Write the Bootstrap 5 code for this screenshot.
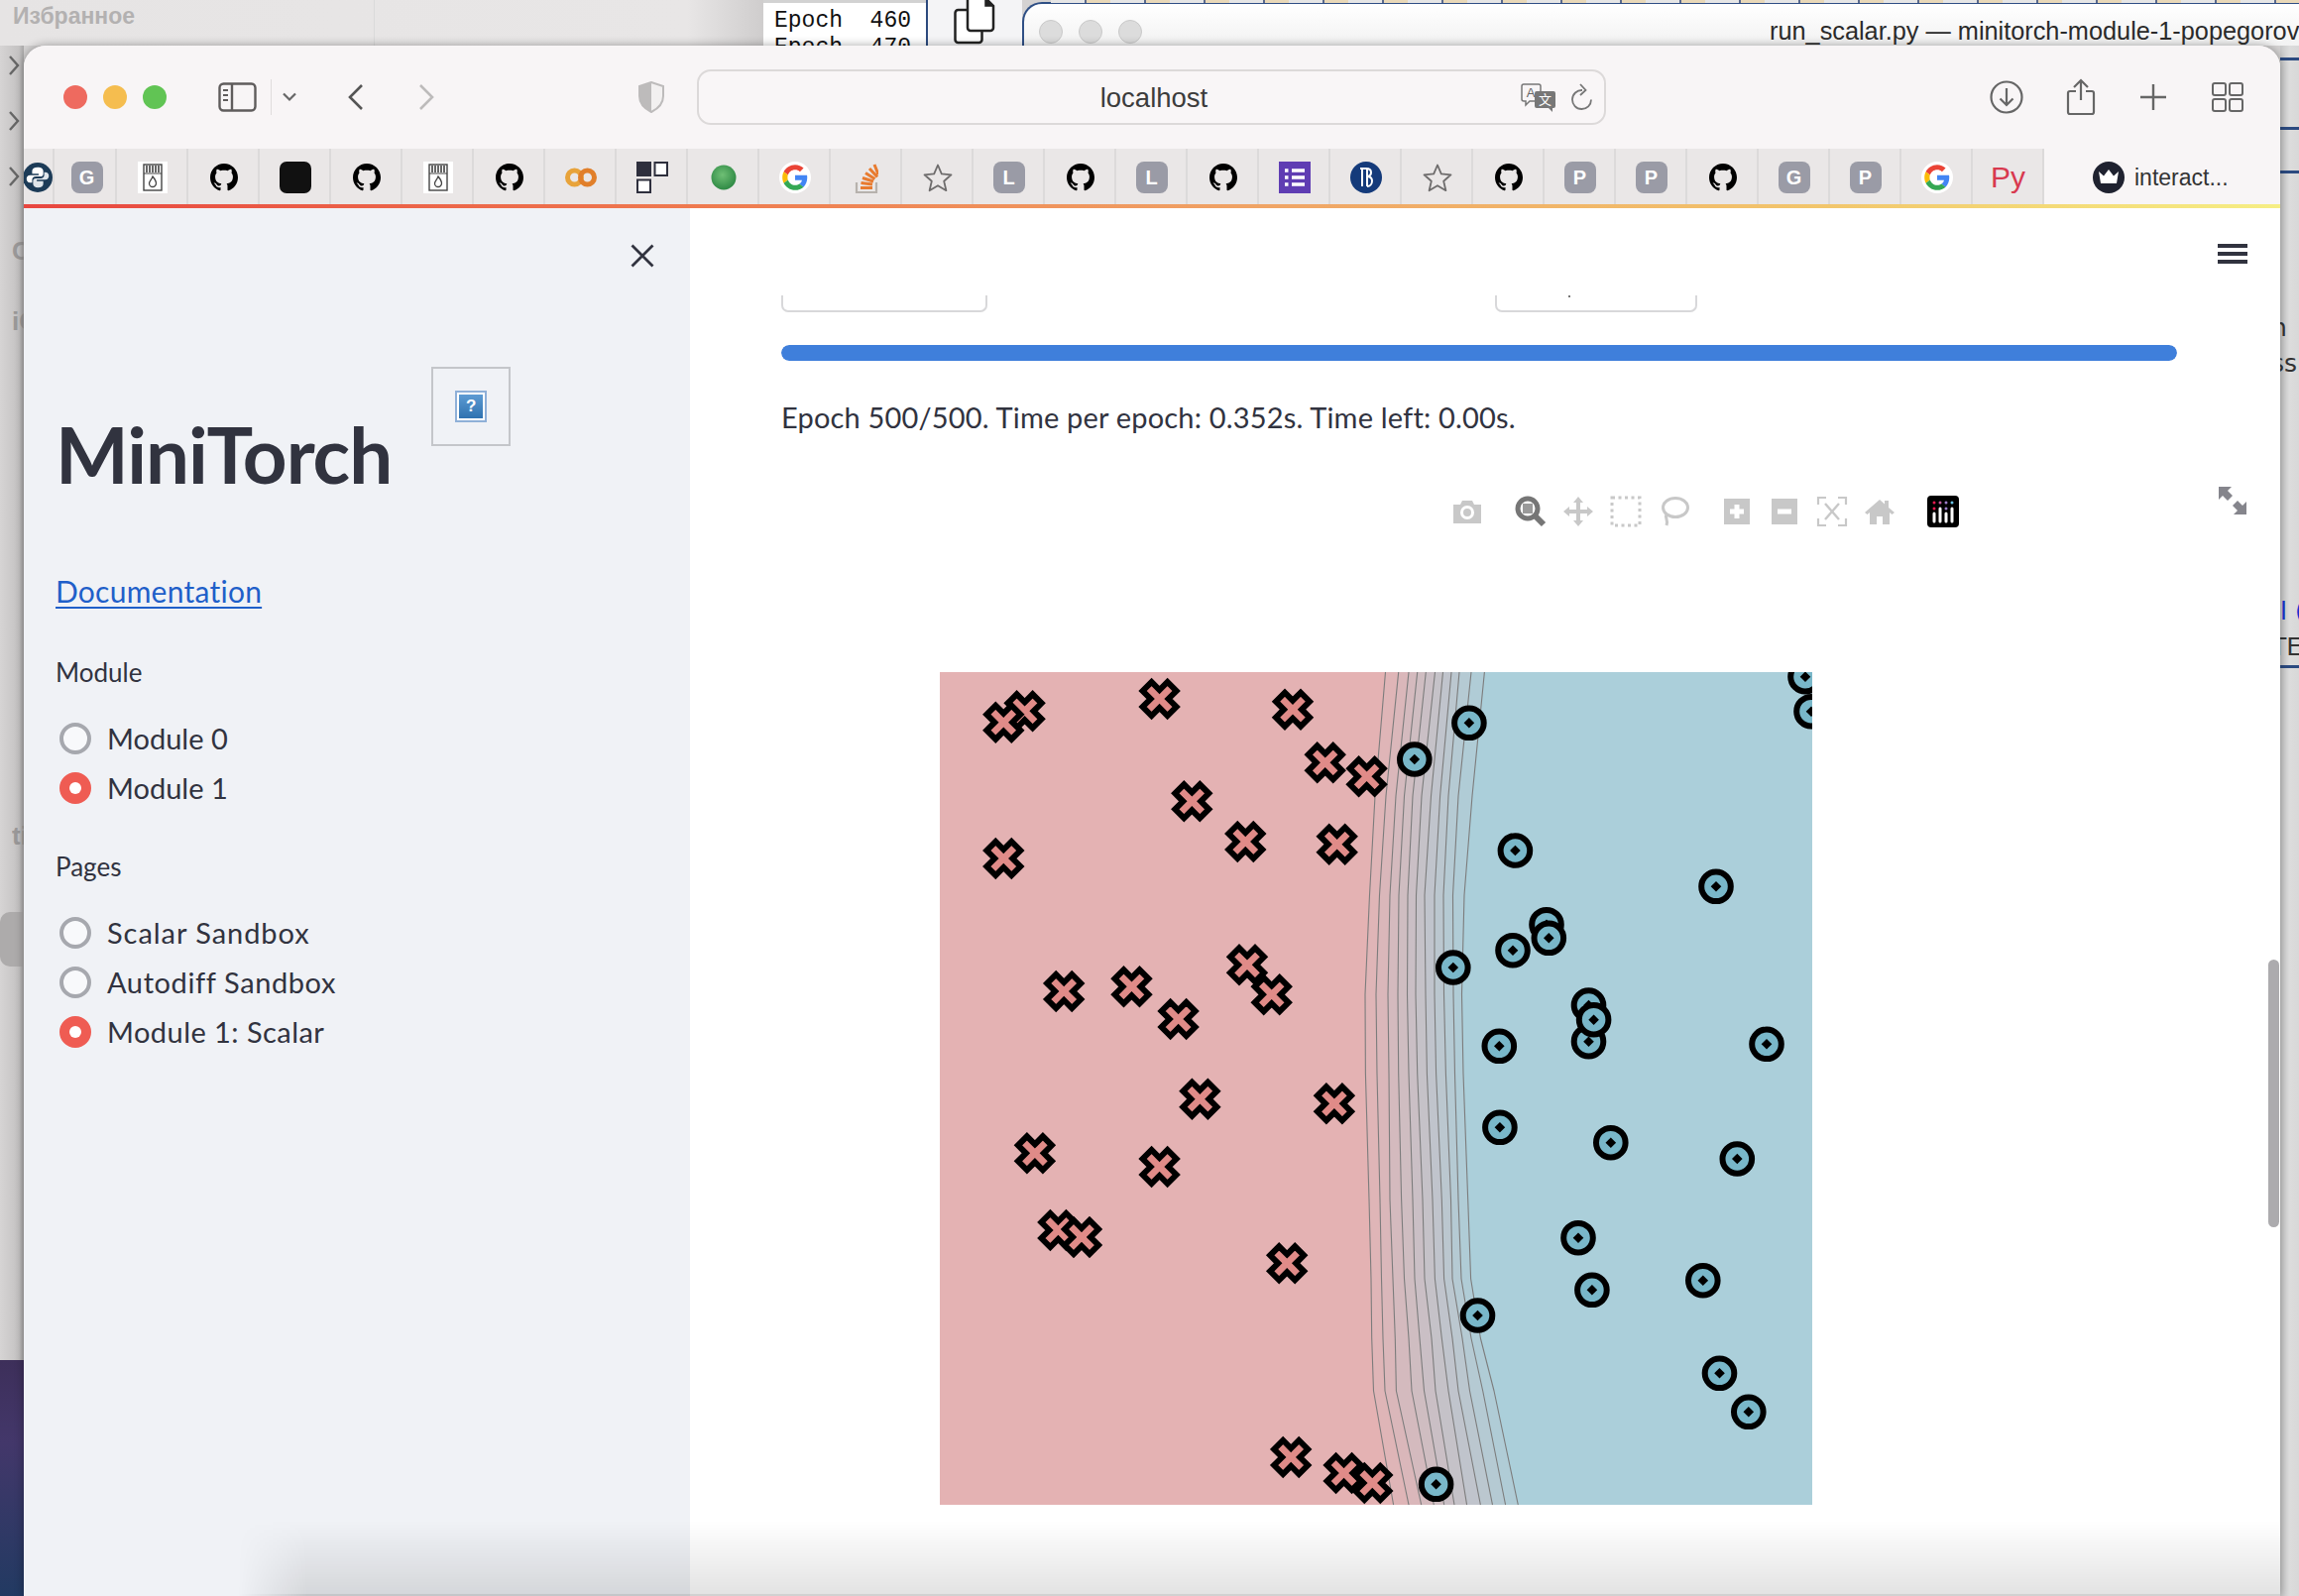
<!DOCTYPE html>
<html lang="en">
<head>
<meta charset="utf-8">
<title>MiniTorch</title>
<link href="https://cdn.jsdelivr.net/npm/bootstrap@5.3.0/dist/css/bootstrap.min.css" rel="stylesheet">
<style>
html,body{margin:0;height:100%;overflow:hidden;background:#d4d2d2;font-family:"Lato","Liberation Sans",sans-serif;color:#31333f}
.desk{position:relative;width:2319px;height:1610px;overflow:hidden}
.bg-left{position:absolute;left:0;top:0;width:770px;height:46px;background:linear-gradient(90deg,#e6e4e4 0,#e8e6e6 90%,#cfcdcd)}
.bg-left-rule{position:absolute;left:377px;top:0;width:1px;height:46px;background:#dadada}
.bg-strip{position:absolute;left:0;top:46px;width:24px;height:1326px;background:linear-gradient(90deg,#d6d4d4,#c4c2c2 80%,#a9a8a8)}
.bg-purple{position:absolute;left:0;top:1372px;width:24px;height:238px;background:linear-gradient(180deg,#3d2f5a,#43376a 35%,#223a62)}
.fav{position:absolute;left:13px;top:3px;font:700 23px "Liberation Sans",sans-serif;color:#b3b1b1}
.chev{position:absolute;left:8px;width:12px;height:22px}
.frag{position:absolute;font:700 26px "Liberation Sans",sans-serif;color:#9b9999;overflow:hidden}
.frag-pill{position:absolute;left:0;top:920px;width:24px;height:55px;background:#adabab;border-radius:10px 0 0 10px}
.term{position:absolute;left:770px;top:3px;width:164px;height:43px;background:#fff;overflow:hidden;font:23px/27px "Liberation Mono",monospace;color:#111;padding:5px 11px 0;white-space:pre}
.term-top{position:absolute;left:770px;top:0;width:164px;height:3px;background:#d2d2d2}
.copy-pane{position:absolute;left:934px;top:0;width:97px;height:46px;background:#f4f4f6;border-left:2px solid #2c4a7e}
.vs-win{position:absolute;left:1031px;top:2px;width:1288px;height:44px;background:linear-gradient(180deg,#fff,#f2f2f2);border:2px solid #2f4f85;border-right:0;border-bottom:0;border-radius:20px 0 0 0}
.vs-top{position:absolute;left:1060px;top:0;width:1259px;height:3px;background:repeating-linear-gradient(90deg,#e6e6e6 0 34px,#5b6a8c 34px 36px,#e9d8b8 36px 60px)}
.vs-dot{position:absolute;top:20px;width:24px;height:24px;border-radius:50%;background:#dcdcdc;border:1px solid #c9c9c9}
.vs-title{position:absolute;left:1785px;top:16px;font:25.3px/30px "Liberation Sans",sans-serif;color:#2a2a2a;white-space:nowrap;width:534px;overflow:hidden;z-index:2}
.bg-right{position:absolute;left:2300px;top:46px;width:19px;height:1564px;background:linear-gradient(90deg,#c9c9c9,#dcdcdc 50%,#d8d8d8)}
.bg-rule{position:absolute;left:2300px;width:19px;height:3px;background:#2b4a80}
.bg-txt{position:absolute;left:2300px;width:19px;overflow:hidden;white-space:nowrap;font:25px/30px "DejaVu Sans",sans-serif;color:#333;text-indent:-9px}

.browser{position:absolute;left:24px;top:46px;width:2276px;height:1564px;background:#f8f5f6;border-radius:22px 22px 0 0;overflow:hidden;box-shadow:0 0 10px rgba(0,0,0,.35)}
.toolbar{height:104px;background:#f8f5f6}
.light{width:24px;height:24px;border-radius:50%}
.l-r{background:#ee6a5f;margin-left:40px}.l-y{background:#f5bd4f;margin-left:16px}.l-g{background:#61c454;margin-left:16px}
.tb-ic{flex:none;display:block}
.m-side{margin-left:52px}.m-sep{width:1px;height:36px;background:#e0dddd;margin-left:14px}.m-cd{margin-left:11px}
.m-back{margin-left:51px}.m-fwd{margin-left:53px}.m-shield{margin-left:204px}
.urlbar{flex:none;width:917px;height:56px;margin-left:32px;padding-left:5px;border:2px solid #dcd9d9;border-radius:14px;background:#f9f6f7;position:relative;font:27.5px/54px "Liberation Sans",sans-serif;color:#3c3c3c;text-align:center}
.url-tr{position:absolute;right:48px;top:12px}.url-re{position:absolute;right:11px;top:12px}
.m-dl{margin-left:387px}.m-share{margin-left:43px}.m-plus{margin-left:44px}.m-grid{margin-left:45px}

.tabstrip{height:56px;background:#f8f5f6}
.tabcell{flex:none;width:72px;height:56px;padding:2px 0 0 1px;background:#eae7e7;border-right:2px solid #dcdada;display:flex;align-items:center;justify-content:center}
.tab-a{width:31px;padding-left:0;justify-content:flex-end;overflow:hidden}
.tab-b{width:63px;padding-left:4px}
.tile{width:32px;height:32px;border-radius:8px;background:#9a9ba6;color:#fff;font:700 20px/32px "Liberation Sans",sans-serif;text-align:center}
.tile-py{font:30px/32px "Liberation Sans",sans-serif;color:#d8394f;width:36px;text-align:center}
.active-tab{flex:none;margin-left:49px;padding-top:2px;font:23px/32px "Liberation Sans",sans-serif;color:#333;white-space:nowrap}
.active-tab svg{margin-right:10px}
.rainbow{height:4px;background:linear-gradient(90deg,#e8463f,#ef7a4f 30%,#f0a465 55%,#f2c66c 80%,#f6ee84)}

.page{height:1400px;position:relative;overflow:hidden;background:#fff}
.side{flex:none;width:672px;background:#f0f2f6;padding:36px 36px 0 32px}
.side-x{height:24px}
.title-row{margin-top:100px}
.app-title{font:700 78px/96px "Lato",sans-serif;letter-spacing:-1px;margin:40px 0 0;color:#31333f}
.broken{width:80px;height:80px;border:2px solid #c4c6ca;margin-left:40px;flex:none}
.broken-in{width:32px;height:32px;border:2px solid #8fb0d8;background:#fff;padding:2px}
.broken-q{display:block;width:100%;height:100%;background:linear-gradient(180deg,#5d9bd3,#2f72b0);color:#fff;font:700 17px/24px "Liberation Sans",sans-serif;text-align:center}
.doc-link{display:block;margin-top:70px;font:30px/40px "Lato",sans-serif;letter-spacing:.25px;color:#1f5fc9;text-decoration:underline;text-underline-offset:4px;text-decoration-thickness:2px}
.grp-label{font:26px/36px "Lato",sans-serif;color:#31333f}
.gl-1{margin-top:44px}.gl-2{margin-top:36px}
.radios{margin-top:24px}.radios-2{margin-top:24px}
.radio-row{height:50px;padding:0 0 0 4px;margin:0;gap:16px;min-height:0}
.radio-row .form-check-input{float:none;margin:0;width:32px;height:32px;flex:none;border:4px solid #a6a8ae;background-color:#f8f9fb}
.radio-row .form-check-input:checked{background-color:#ef5c53;border-color:#ef5c53}
.radio-row .form-check-label{font:29px/40px "Lato",sans-serif;color:#31333f}
.radio-row .ls-s{letter-spacing:.95px}.radio-row .ls-a{letter-spacing:.6px}.radio-row .ls-m{letter-spacing:.45px}

.main-pane{flex:1 1 auto;min-width:0;background:#fff;position:relative}
.main-head{height:88px;padding:36px 33px 0 0}
.burger{width:30px;height:20px;border-top:4px solid #31333f;border-bottom:4px solid #31333f;position:relative}
.burger::before{content:"";position:absolute;left:0;right:0;top:4px;height:4px;background:#31333f}
.inner{padding:0 104px 0 92px}
.stub-row{height:17px}
.stub{height:17px;border:2px solid #d8d8da;border-top:0;border-radius:0 0 7px 7px}
.stub-a{width:208px}.stub-b{width:204px;margin-left:512px;position:relative}
.stub-b::after{content:"";position:absolute;left:72px;top:0;width:2px;height:2px;background:#777}
.prog{height:16px;margin-top:33px;border-radius:8px;background:#f0f2f6}
.prog .progress-bar{background:#3f7fdb;border-radius:8px}
.status{margin:37px 0 0;font:29px/40px "Lato",sans-serif;letter-spacing:.18px;color:#31333f;white-space:nowrap}
.modebar{margin:59px 0 0 676px;height:32px;gap:32px}
.mb-g{gap:16px}
.expand{position:absolute;left:1542px;top:281px}
.plot{display:block;margin:146px 0 0 160px;width:880px;height:840px}
.scrolly{position:absolute;right:1px;top:758px;width:11px;height:270px;border-radius:6px;background:#acabae}
.dock-shade{position:absolute;left:216px;right:0;bottom:0;height:76px;background:linear-gradient(0deg,rgba(0,0,0,.11),rgba(0,0,0,0));border-bottom:2px solid rgba(0,0,0,.18);-webkit-mask-image:linear-gradient(90deg,transparent,#000 70px);mask-image:linear-gradient(90deg,transparent,#000 70px);pointer-events:none}
</style>
</head>
<body>
<svg width="0" height="0" class="position-absolute">
  <defs>
    <symbol id="gh" viewBox="0 0 24 24"><path fill="#000" d="M12 0c-6.626 0-12 5.373-12 12 0 5.302 3.438 9.8 8.207 11.387.599.111.793-.261.793-.577v-2.234c-3.338.726-4.033-1.416-4.033-1.416-.546-1.387-1.333-1.756-1.333-1.756-1.089-.745.083-.729.083-.729 1.205.084 1.839 1.237 1.839 1.237 1.07 1.834 2.807 1.304 3.492.997.107-.775.418-1.305.762-1.604-2.665-.305-5.467-1.334-5.467-5.931 0-1.311.469-2.381 1.236-3.221-.124-.303-.535-1.524.117-3.176 0 0 1.008-.322 3.301 1.23.957-.266 1.983-.399 3.003-.404 1.02.005 2.047.138 3.006.404 2.291-1.552 3.297-1.23 3.297-1.23.653 1.653.242 2.874.118 3.176.77.84 1.235 1.911 1.235 3.221 0 4.609-2.807 5.624-5.479 5.921.43.372.823 1.102.823 2.222v3.293c0 .319.192.694.801.576 4.765-1.589 8.199-6.086 8.199-11.386 0-6.627-5.373-12-12-12z"/></symbol>
    <symbol id="goog" viewBox="-6 -6 60 60"><circle cx="24" cy="24" r="30" fill="#fff"/><path fill="#EA4335" d="M24 9.5c3.54 0 6.71 1.22 9.21 3.6l6.85-6.85C35.9 2.38 30.47 0 24 0 14.62 0 6.51 5.38 2.56 13.22l7.98 6.19C12.43 13.72 17.74 9.5 24 9.5z"/><path fill="#4285F4" d="M46.98 24.55c0-1.57-.15-3.09-.38-4.55H24v9.02h12.94c-.58 2.96-2.26 5.48-4.78 7.18l7.73 6c4.51-4.18 7.09-10.36 7.09-17.65z"/><path fill="#FBBC05" d="M10.53 28.59c-.48-1.45-.76-2.99-.76-4.59s.27-3.14.76-4.59l-7.98-6.19C.92 16.46 0 20.12 0 24c0 3.88.92 7.54 2.56 10.78l7.97-6.19z"/><path fill="#34A853" d="M24 48c6.48 0 11.93-2.13 16.03-5.81l-7.73-6c-2.15 1.45-4.92 2.3-8.3 2.3-6.26 0-11.57-4.22-13.47-9.91l-7.98 6.19C6.51 42.62 14.62 48 24 48z"/></symbol>
    <symbol id="match" viewBox="0 0 30 32"><rect width="30" height="32" fill="#fff"/><rect x="6" y="3" width="18" height="26" fill="#fff" stroke="#444" stroke-width="1.4"/><path d="M9 4v7M12 4v7M15 4v7M18 4v7M21 4v7" stroke="#333" stroke-width="1.5"/><path d="M6 12h18" stroke="#444" stroke-width="1.2"/><path d="M15 15c2.500 3 3.500 5 3.500 7a3.500 3.500 0 0 1-7 0c0-2 2-3 3.500-7z" fill="none" stroke="#444" stroke-width="1.3"/></symbol>
    <symbol id="star" viewBox="0 0 32 32"><path d="M16 3.500l3.800 8.900 9.700.9-7.300 6.400 2.200 9.500-8.400-5-8.400 5 2.200-9.500-7.300-6.400 9.700-.9z" fill="none" stroke="#6e6c6c" stroke-width="1.800" stroke-linejoin="round"/></symbol>
    <g id="mx"><path d="M0-9 8-17 17-8 9 0 17 8 8 17 0 9-8 17-17 8-9 0-17-8-8-17Z" fill="#e08b88" stroke="#000" stroke-width="6" stroke-linejoin="miter" stroke-miterlimit="4"/></g>
    <g id="mo"><circle r="14.800" fill="#79b7c9" stroke="#000" stroke-width="6"/><path d="M0-5.300 5.300 0 0 5.300-5.300 0Z" fill="#000"/></g>
    <clipPath id="plotclip"><rect x="948" y="678" width="880" height="840"/></clipPath>
  </defs>
</svg>

<div class="desk">
  <!-- desktop behind the browser -->
  <div class="bg-left"></div><div class="bg-left-rule"></div>
  <div class="fav">Избранное</div>
  <div class="bg-strip"></div><div class="bg-purple"></div>
  <svg class="chev" style="top:55px" viewBox="0 0 12 22"><path d="M2 2l8 9-8 9" fill="none" stroke="#666" stroke-width="2.400"/></svg>
  <svg class="chev" style="top:111px" viewBox="0 0 12 22"><path d="M2 2l8 9-8 9" fill="none" stroke="#666" stroke-width="2.400"/></svg>
  <svg class="chev" style="top:167px" viewBox="0 0 12 22"><path d="M2 2l8 9-8 9" fill="none" stroke="#666" stroke-width="2.400"/></svg>
  <div class="frag" style="left:12px;top:238px;width:12px">C</div>
  <div class="frag" style="left:12px;top:309px;width:12px">iC</div>
  <div class="frag" style="left:12px;top:828px;width:12px">ti</div>
  <div class="frag-pill"></div>
  <div class="term-top"></div>
  <div class="term">Epoch  460
Epoch  470</div>
  <div class="copy-pane"></div>
  <svg class="position-absolute" style="left:960px;top:0" width="46" height="46" viewBox="0 0 46 46"><rect x="3.500" y="10" width="27" height="33" rx="3" fill="#fff" stroke="#222" stroke-width="2.500"/><path d="M17-3h16l9 9v22a3 3 0 0 1-3 3H19a3 3 0 0 1-3-3V-3z" fill="#fff" stroke="#222" stroke-width="2.500"/><path d="M34-3v9h8" fill="#222" stroke="#222" stroke-width="1.500"/></svg>
  <div class="vs-win"></div><div class="vs-top"></div>
  <div class="vs-dot" style="left:1048px"></div><div class="vs-dot" style="left:1088px"></div><div class="vs-dot" style="left:1128px"></div>
  <div class="vs-title">run_scalar.py — minitorch-module-1-popegorov</div>
  <div class="bg-right"></div>
  <div class="bg-rule" style="top:58px"></div><div class="bg-rule" style="top:128px"></div><div class="bg-rule" style="top:172px"></div>
  <div class="bg-txt" style="top:316px">n</div>
  <div class="bg-txt" style="top:352px">ss</div>
  <div class="bg-txt" style="top:602px;color:#1432d0;text-indent:0">l (</div>
  <div class="bg-txt" style="top:638px">TE</div>
  <div class="bg-rule" style="top:671px"></div>

  <!-- browser window -->
  <div class="browser d-flex flex-column">
    <div class="toolbar d-flex align-items-center">
      <span class="light l-r"></span><span class="light l-y"></span><span class="light l-g"></span>
      <svg class="tb-ic m-side" width="39" height="30" viewBox="0 0 39 30"><rect x="1.500" y="1.500" width="36" height="27" rx="4" fill="none" stroke="#5f5c5c" stroke-width="2.400"/><path d="M14 2v26" stroke="#5f5c5c" stroke-width="2.400"/><path d="M5 8h5M5 13h5M5 18h5" stroke="#5f5c5c" stroke-width="2"/></svg>
      <span class="m-sep"></span>
      <svg class="tb-ic m-cd" width="14" height="10" viewBox="0 0 14 10"><path d="M1 1.500l6 6 6-6" fill="none" stroke="#666" stroke-width="2.200"/></svg>
      <svg class="tb-ic m-back" width="18" height="28" viewBox="0 0 18 28"><path d="M15 2 3 14l12 12" fill="none" stroke="#555" stroke-width="2.600"/></svg>
      <svg class="tb-ic m-fwd" width="18" height="28" viewBox="0 0 18 28"><path d="M3 2l12 12L3 26" fill="none" stroke="#bdbbbb" stroke-width="2.600"/></svg>
      <svg class="tb-ic m-shield" width="28" height="32" viewBox="0 0 28 32"><path d="M14 1 2 5v10c0 8 6 13 12 16 6-3 12-8 12-16V5z" fill="#f2f0f0" stroke="#bdbbbb" stroke-width="2"/><path d="M14 1 2 5v10c0 8 6 13 12 16z" fill="#bdbbbb"/></svg>
      <div class="urlbar">localhost
        <svg class="url-tr" width="36" height="30" viewBox="0 0 36 30"><path d="M3 1h15a2 2 0 0 1 2 2v13a2 2 0 0 1-2 2H9l-4 4v-4H3a2 2 0 0 1-2-2V3a2 2 0 0 1 2-2z" fill="#f8f5f6" stroke="#777" stroke-width="1.500"/><text x="10" y="14" font-size="13" font-family="Liberation Sans" text-anchor="middle" fill="#666">A</text><path d="M16 8h17a2 2 0 0 1 2 2v13a2 2 0 0 1-2 2h-1v4l-4-4H16a2 2 0 0 1-2-2V10a2 2 0 0 1 2-2z" fill="#777"/><text x="24.500" y="21" font-size="13" font-family="Noto Sans CJK SC" text-anchor="middle" fill="#fff">文</text></svg>
        <svg class="url-re" width="22" height="30" viewBox="0 0 22 30"><path d="M11 7a9.500 9.500 0 1 0 9 9.500" fill="none" stroke="#777" stroke-width="1.800"/><path d="M9 1l5.500 6L9 12" fill="none" stroke="#777" stroke-width="1.800"/></svg>
      </div>
      <svg class="tb-ic m-dl" width="34" height="34" viewBox="0 0 34 34"><circle cx="17" cy="17" r="15.500" fill="none" stroke="#666" stroke-width="2.200"/><path d="M17 8v17M10.500 18.500 17 25l6.500-6.500" fill="none" stroke="#666" stroke-width="2.200"/></svg>
      <svg class="tb-ic m-share" width="30" height="38" viewBox="0 0 30 38"><path d="M15 22V2M8 9l7-7 7 7" fill="none" stroke="#666" stroke-width="2.200"/><path d="M10 13H4a2 2 0 0 0-2 2v19a2 2 0 0 0 2 2h22a2 2 0 0 0 2-2V15a2 2 0 0 0-2-2h-6" fill="none" stroke="#666" stroke-width="2.200"/></svg>
      <svg class="tb-ic m-plus" width="28" height="28" viewBox="0 0 28 28"><path d="M14 1v26M1 14h26" stroke="#666" stroke-width="2.400"/></svg>
      <svg class="tb-ic m-grid" width="32" height="30" viewBox="0 0 32 30"><rect x="1" y="1" width="13" height="12" rx="2" fill="none" stroke="#666" stroke-width="2"/><rect x="18" y="1" width="13" height="12" rx="2" fill="none" stroke="#666" stroke-width="2"/><rect x="1" y="17" width="13" height="12" rx="2" fill="none" stroke="#666" stroke-width="2"/><rect x="18" y="17" width="13" height="12" rx="2" fill="none" stroke="#666" stroke-width="2"/></svg>
    </div>

    <div class="tabstrip d-flex align-items-stretch">
      <div class="tabcell tab-a"><svg width="31" height="32" viewBox="1 0 31 32"><circle cx="16" cy="16" r="16" fill="#1c3b57"/><path d="M16 5c-4 0-6 1.500-6 4v3h7v1.500H8c-3 0-4 2-4 4s1 4 4 4h2v-3c0-2 1.500-3.500 4-3.500h5c2 0 3-1 3-3V9c0-2.500-2.500-4-6-4z" fill="#fff"/><path d="M16 27c4 0 6-1.500 6-4v-3h-7v-1.500h9c3 0 4-2 4-4s-1-4-4-4h-1v3c0 2-1.500 3.500-4 3.500h-5c-2 0-3 1-3 3V23c0 2.500 2.500 4 5 4z" fill="#dfe5ea"/></svg></div>
      <div class="tabcell tab-b"><div class="tile">G</div></div>
      <div class="tabcell"><svg width="30" height="32"><use href="#match"/></svg></div>
      <div class="tabcell"><svg width="28" height="28"><use href="#gh"/></svg></div>
      <div class="tabcell"><svg width="32" height="32" viewBox="0 0 32 32"><rect width="32" height="32" rx="7" fill="#111"/></svg></div>
      <div class="tabcell"><svg width="28" height="28"><use href="#gh"/></svg></div>
      <div class="tabcell"><svg width="30" height="32"><use href="#match"/></svg></div>
      <div class="tabcell"><svg width="28" height="28"><use href="#gh"/></svg></div>
      <div class="tabcell"><svg width="32" height="20" viewBox="0 0 32 20"><circle cx="9.500" cy="10" r="7" fill="none" stroke="#e8a33a" stroke-width="5"/><circle cx="22.500" cy="10" r="7" fill="none" stroke="#e17f2a" stroke-width="5"/></svg></div>
      <div class="tabcell"><svg width="32" height="32" viewBox="0 0 32 32"><rect width="15" height="15" fill="#2e2f3d"/><rect x="18.500" y="1" width="12.500" height="13" fill="#fff" stroke="#2e2f3d" stroke-width="2"/><rect x="1" y="18.500" width="13" height="12.500" fill="#fff" stroke="#2e2f3d" stroke-width="2"/></svg></div>
      <div class="tabcell"><svg width="26" height="26" viewBox="0 0 26 26"><defs><radialGradient id="ball" cx=".45" cy=".4" r=".6"><stop offset="0" stop-color="#6fbf75"/><stop offset="1" stop-color="#2f8a45"/></radialGradient></defs><circle cx="13" cy="13" r="12.500" fill="url(#ball)"/></svg></div>
      <div class="tabcell"><svg width="32" height="32"><use href="#goog"/></svg></div>
      <div class="tabcell"><svg width="24" height="32" viewBox="0 0 24 32"><path d="M2 21v10h20V21" fill="none" stroke="#b7b2ad" stroke-width="2.200"/><g stroke="#e87b30" stroke-width="3"><path d="M6 26.500h12M6.500 21.500 18 23M8 16.500l11 3.500M11 11.500l9.500 6M15 7l8 8.500M20 3l4 10"/></g></svg></div>
      <div class="tabcell"><svg width="32" height="32"><use href="#star"/></svg></div>
      <div class="tabcell"><div class="tile">L</div></div>
      <div class="tabcell"><svg width="28" height="28"><use href="#gh"/></svg></div>
      <div class="tabcell"><div class="tile">L</div></div>
      <div class="tabcell"><svg width="28" height="28"><use href="#gh"/></svg></div>
      <div class="tabcell"><svg width="32" height="32" viewBox="0 0 32 32"><rect width="32" height="32" fill="#5f3db3"/><path d="M13 9h13M13 16h13M13 23h13" stroke="#fff" stroke-width="3.500"/><path d="M6 9h3.500M6 16h3.500M6 23h3.500" stroke="#fff" stroke-width="3.500"/></svg></div>
      <div class="tabcell"><svg width="32" height="32" viewBox="0 0 32 32"><circle cx="16" cy="16" r="16" fill="#143a7a"/><path d="M10 7h6c4 0 5 2 5 4s-1 3.500-3 4c3 .5 4 2 4 4.500 0 3-2 5.500-5 5.500M12 7v18M17 7v18" fill="none" stroke="#fff" stroke-width="2"/></svg></div>
      <div class="tabcell"><svg width="32" height="32"><use href="#star"/></svg></div>
      <div class="tabcell"><svg width="28" height="28"><use href="#gh"/></svg></div>
      <div class="tabcell"><div class="tile">P</div></div>
      <div class="tabcell"><div class="tile">P</div></div>
      <div class="tabcell"><svg width="28" height="28"><use href="#gh"/></svg></div>
      <div class="tabcell"><div class="tile">G</div></div>
      <div class="tabcell"><div class="tile">P</div></div>
      <div class="tabcell"><svg width="32" height="32"><use href="#goog"/></svg></div>
      <div class="tabcell"><div class="tile-py">Py</div></div>
      <div class="active-tab d-flex align-items-center"><svg width="32" height="32" viewBox="0 0 32 32"><circle cx="16" cy="16" r="16" fill="#1f2230"/><path d="M6 10l5 4.500L16 8l5 6.500L26 10l-2 12H8z" fill="#fff"/></svg>interact...</div>
    </div>
    <div class="rainbow"></div>

    <div class="page d-flex flex-grow-1">
      <aside class="side">
        <div class="side-x d-flex justify-content-end"><svg width="24" height="24" viewBox="0 0 24 24"><path d="M1.500 1.500l21 21M22.500 1.500l-21 21" stroke="#31333f" stroke-width="2.800"/></svg></div>
        <div class="title-row d-flex align-items-start">
          <h1 class="app-title">MiniTorch</h1>
          <div class="broken d-flex align-items-center justify-content-center"><div class="broken-in"><span class="broken-q">?</span></div></div>
        </div>
        <a class="doc-link" href="#">Documentation</a>
        <div class="grp-label gl-1">Module</div>
        <div class="radios">
          <div class="form-check radio-row d-flex align-items-center"><input class="form-check-input" type="radio" name="m" id="m0"><label class="form-check-label" for="m0">Module 0</label></div>
          <div class="form-check radio-row d-flex align-items-center"><input class="form-check-input" type="radio" name="m" id="m1" checked><label class="form-check-label" for="m1">Module 1</label></div>
        </div>
        <div class="grp-label gl-2">Pages</div>
        <div class="radios-2">
          <div class="form-check radio-row d-flex align-items-center"><input class="form-check-input" type="radio" name="p" id="p0"><label class="form-check-label ls-s" for="p0">Scalar Sandbox</label></div>
          <div class="form-check radio-row d-flex align-items-center"><input class="form-check-input" type="radio" name="p" id="p1"><label class="form-check-label ls-a" for="p1">Autodiff Sandbox</label></div>
          <div class="form-check radio-row d-flex align-items-center"><input class="form-check-input" type="radio" name="p" id="p2" checked><label class="form-check-label ls-m" for="p2">Module 1: Scalar</label></div>
        </div>
      </aside>

      <main class="main-pane">
        <div class="main-head d-flex justify-content-end"><div class="burger"></div></div>
        <div class="inner">
          <div class="stub-row d-flex"><div class="stub stub-a"></div><div class="stub stub-b"></div></div>
          <div class="progress prog"><div class="progress-bar w-100"></div></div>
          <p class="status">Epoch 500/500. Time per epoch: 0.352s. Time left: 0.00s.</p>
          <div class="modebar d-flex">
            <svg width="32" height="32" viewBox="0 0 32 32"><path d="M2 9h7l2-4h10l2 4h7v19H2z" fill="#c8c8c8"/><circle cx="16" cy="17" r="7" fill="#fff"/><circle cx="16" cy="17" r="4" fill="#c8c8c8"/></svg>
            <div class="d-flex mb-g">
              <svg width="32" height="32" viewBox="0 0 32 32"><circle cx="13" cy="13" r="10" fill="none" stroke="#767676" stroke-width="5"/><rect x="8" y="8" width="10" height="10" fill="#9a9a9a"/><path d="M20 20l9 9" stroke="#767676" stroke-width="6"/></svg>
              <svg width="32" height="32" viewBox="0 0 32 32"><path d="M16 1l5 6h-3v7h7v-3l6 5-6 5v-3h-7v7h3l-5 6-5-6h3v-7H7v3l-6-5 6-5v3h7V7h-3z" fill="#c8c8c8"/></svg>
              <svg width="32" height="32" viewBox="0 0 32 32"><rect x="2" y="2" width="28" height="28" fill="none" stroke="#c8c8c8" stroke-width="3" stroke-dasharray="3 3.500"/></svg>
              <svg width="32" height="32" viewBox="0 0 32 32"><ellipse cx="18" cy="12" rx="12.500" ry="9.500" fill="none" stroke="#c8c8c8" stroke-width="3"/><path d="M9 19c-2 3 2 5 0 11" fill="none" stroke="#c8c8c8" stroke-width="3"/></svg>
            </div>
            <div class="d-flex mb-g">
              <svg width="32" height="32" viewBox="0 0 32 32"><path d="M3 3h26v26H3zM13.500 9v4.500H9v5h4.500V23h5v-4.500H23v-5h-4.500V9z" fill="#c8c8c8" fill-rule="evenodd"/></svg>
              <svg width="32" height="32" viewBox="0 0 32 32"><path d="M3 3h26v26H3zM9 13.500v5h14v-5z" fill="#c8c8c8" fill-rule="evenodd"/></svg>
              <svg width="32" height="32" viewBox="0 0 32 32"><path d="M2 9V2h8M22 2h8v7M30 23v7h-8M10 30H2v-7" fill="none" stroke="#c8c8c8" stroke-width="2.200"/><path d="M9 8l14 16M23 8L9 24" stroke="#c8c8c8" stroke-width="2.400"/></svg>
              <svg width="32" height="32" viewBox="0 0 32 32"><path d="M16 4 1 17l2.500 2L6 17v12h7v-8h6v8h7V17l2.500 2 2.500-2-6-5V5h-4v3.500z" fill="#c8c8c8"/></svg>
            </div>
            <svg width="32" height="32" viewBox="0 0 32 32"><rect width="32" height="32" rx="4" fill="#000"/><g fill="#e8184f"><circle cx="7" cy="7" r="1.500"/><circle cx="7" cy="13" r="1.500"/></g><circle cx="13" cy="7" r="1.500" fill="#c05a9e"/><circle cx="19" cy="7" r="1.500" fill="#9c7dc8"/><circle cx="19" cy="13" r="1.500" fill="#9c7dc8"/><circle cx="25" cy="7" r="1.500" fill="#6cc5e8"/><g stroke="#fff" stroke-width="3" stroke-linecap="round"><path d="M7 18v8M13 13v13M19 18v8M25 13v13"/></g></svg>
          </div>
          <svg class="plot" viewBox="948 678 880 840" xmlns="http://www.w3.org/2000/svg">
            <g clip-path="url(#plotclip)">
              <rect x="948" y="678" width="880" height="840" fill="#abcfda"/>
              <g stroke="#7c7c7c" stroke-width="1.100" stroke-linejoin="round">
                <polygon fill="rgb(176,204,214)" points="900,670 1498,670 1497.400,678 1485,803 1477,903 1474.500,1003 1476,1083 1480.700,1210 1483.600,1290 1493.400,1350 1507,1403 1531.300,1518 1533,1526 900,1526"/>
                <polygon fill="rgb(181,202,211)" points="900,670 1485,670 1484,678 1471,803 1465.500,903 1466,1003 1467.500,1083 1471,1210 1474,1290 1484,1350 1495.700,1403 1518.600,1518 1520,1526 900,1526"/>
                <polygon fill="rgb(187,199,207)" points="900,670 1473,670 1472,678 1461,803 1456,903 1456.500,1003 1458.400,1083 1463.500,1210 1465,1290 1475,1350 1482.500,1403 1505.500,1518 1507,1526 900,1526"/>
                <polygon fill="rgb(192,196,204)" points="900,670 1465,670 1464,678 1452.600,803 1447,903 1447,1003 1448.600,1083 1454.300,1210 1456.600,1290 1465,1350 1471,1403 1493.400,1518 1495,1526 900,1526"/>
                <polygon fill="rgb(197,194,200)" points="900,670 1456,670 1455.500,678 1443.500,803 1437,903 1438,1003 1439.400,1083 1445,1210 1447.400,1290 1454.300,1350 1461,1403 1479.600,1518 1481,1526 900,1526"/>
                <polygon fill="rgb(202,191,197)" points="900,670 1448,670 1447.500,678 1434,803 1428.500,903 1428,1003 1429.700,1083 1435,1210 1437,1290 1444,1350 1448,1403 1467,1518 1468,1526 900,1526"/>
                <polygon fill="rgb(207,189,193)" points="900,670 1439,670 1438.300,678 1425,803 1420,903 1419.500,1003 1421,1083 1425,1210 1427,1290 1432,1350 1436.500,1403 1456.700,1518 1458,1526 900,1526"/>
                <polygon fill="rgb(212,186,190)" points="900,670 1430,670 1429.700,678 1416.500,803 1411,903 1410,1003 1410.700,1083 1413.600,1210 1416.500,1290 1421,1350 1424,1403 1446.300,1518 1448,1526 900,1526"/>
                <polygon fill="rgb(218,183,186)" points="900,670 1422,670 1421,678 1408,803 1402,903 1400,1003 1401,1083 1402,1210 1405,1290 1407.300,1350 1408.400,1403 1433.700,1518 1435,1526 900,1526"/>
                <polygon fill="rgb(223,181,183)" points="900,670 1411,670 1410.700,678 1398,803 1391.500,903 1388,1003 1389,1083 1392,1210 1393.500,1290 1395,1350 1397,1403 1421,1518 1423,1526 900,1526"/>
                <polygon fill="rgb(228,178,179)" points="900,670 1398,670 1397.500,678 1387,803 1381.500,903 1377,1003 1377.400,1083 1381,1210 1383,1290 1383.700,1350 1385.500,1403 1405.600,1518 1407,1526 900,1526"/>
              </g>
              <g>
                <use href="#mx" x="1033.600" y="717.300"/><use href="#mx" x="1012.300" y="728.700"/>
                <use href="#mx" x="1169.600" y="705"/><use href="#mx" x="1304" y="715.700"/>
                <use href="#mx" x="1336.700" y="769.300"/><use href="#mx" x="1378.600" y="783.300"/>
                <use href="#mx" x="1202.300" y="808.300"/><use href="#mx" x="1256.300" y="849"/>
                <use href="#mx" x="1348.700" y="851.700"/><use href="#mx" x="1012.300" y="866"/>
                <use href="#mx" x="1073.200" y="1000"/><use href="#mx" x="1141.500" y="995.300"/>
                <use href="#mx" x="1188.600" y="1028"/><use href="#mx" x="1258" y="973.300"/>
                <use href="#mx" x="1282.700" y="1003.300"/><use href="#mx" x="1210.400" y="1108.700"/>
                <use href="#mx" x="1345.900" y="1113.300"/><use href="#mx" x="1043.900" y="1163.300"/>
                <use href="#mx" x="1169.600" y="1177"/><use href="#mx" x="1067.400" y="1241"/>
                <use href="#mx" x="1091" y="1248"/><use href="#mx" x="1298.200" y="1274.300"/>
                <use href="#mx" x="1302.200" y="1470"/><use href="#mx" x="1355.600" y="1486"/>
                <use href="#mx" x="1384.300" y="1496"/>
              </g>
              <g>
                <use href="#mo" x="1481.900" y="729.300"/><use href="#mo" x="1426.800" y="766"/>
                <use href="#mo" x="1528.400" y="858"/><use href="#mo" x="1731" y="894.300"/>
                <use href="#mo" x="1560" y="932.700"/><use href="#mo" x="1562.300" y="946.300"/>
                <use href="#mo" x="1526" y="958.700"/><use href="#mo" x="1465.800" y="976"/>
                <use href="#mo" x="1602.500" y="1014"/><use href="#mo" x="1602.500" y="1050.700"/>
                <use href="#mo" x="1607.600" y="1028.700"/><use href="#mo" x="1512.300" y="1055.300"/>
                <use href="#mo" x="1782" y="1053.300"/><use href="#mo" x="1821" y="682.700"/>
                <use href="#mo" x="1827" y="717.700"/><use href="#mo" x="1512.900" y="1137.300"/>
                <use href="#mo" x="1624.800" y="1152.700"/><use href="#mo" x="1752.300" y="1169"/>
                <use href="#mo" x="1592" y="1248.700"/><use href="#mo" x="1605.900" y="1301.300"/>
                <use href="#mo" x="1717.800" y="1291.700"/><use href="#mo" x="1490.500" y="1327"/>
                <use href="#mo" x="1734.500" y="1385.300"/><use href="#mo" x="1763.800" y="1424.300"/>
                <use href="#mo" x="1448.600" y="1497.300"/>
              </g>
            </g>
          </svg>
        </div>
        <svg class="expand" width="28" height="28" viewBox="0 0 28 28"><path d="M0 0h13l-4 4 5 5-5 5-5-5-4 4z" fill="#85858c"/><path d="M28 28H15l4-4-5-5 5-5 5 5 4-4z" fill="#85858c"/></svg>
        <div class="scrolly"></div>
      </main>
      <div class="dock-shade"></div>
    </div>
  </div>
</div>
</body>
</html>
